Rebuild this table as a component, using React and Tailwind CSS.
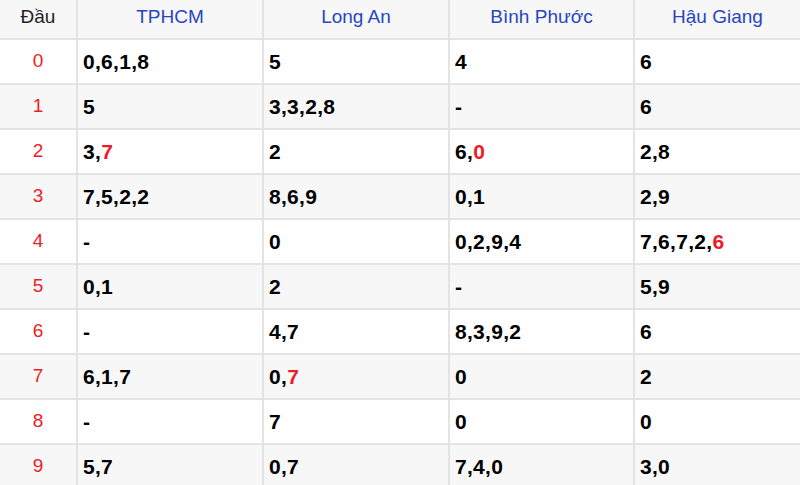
import React from "react";

const cols = ["TPHCM", "Long An", "Bình Phước", "Hậu Giang"];
// each cell: [text, redLast]
const rows = [
  [["0,6,1,8"], ["5"], ["4"], ["6"]],
  [["5"], ["3,3,2,8"], ["-"], ["6"]],
  [["3,", "7"], ["2"], ["6,", "0"], ["2,8"]],
  [["7,5,2,2"], ["8,6,9"], ["0,1"], ["2,9"]],
  [["-"], ["0"], ["0,2,9,4"], ["7,6,7,2,", "6"]],
  [["0,1"], ["2"], ["-"], ["5,9"]],
  [["-"], ["4,7"], ["8,3,9,2"], ["6"]],
  [["6,1,7"], ["0,", "7"], ["0"], ["2"]],
  [["-"], ["7"], ["0"], ["0"]],
  [["5,7"], ["0,7"], ["7,4,0"], ["3,0"]],
];

export default function App() {
  return (
    <div
      className="w-[800px] h-[485px] overflow-hidden bg-white"
      style={{ fontFamily: '"Liberation Sans", Arial, sans-serif' }}
    >
      <div className="grid grid-cols-[78px_186px_186px_185px_165px]">
        <div className="h-[40px] bg-[#f7f7f7] border-r-2 border-b-2 border-[#e3e3e3] flex items-center justify-center text-[19px] text-[#222] pb-[4px]">
          Đầu
        </div>
        {cols.map((c, i) => (
          <div
            key={c}
            className={`h-[40px] bg-[#f7f7f7] border-b-2 border-[#e3e3e3] flex items-center justify-center text-[19px] text-[#2946c0] pb-[4px] ${i < 3 ? "border-r-2" : ""}`}
          >
            {c}
          </div>
        ))}
        {rows.map((r, ri) => {
          const bg = ri % 2 === 1 ? "bg-[#f7f7f7]" : "bg-white";
          return (
            <React.Fragment key={ri}>
              <div
                className={`h-[45px] ${bg} border-r-2 border-b-2 border-[#e3e3e3] flex items-center justify-center text-[19px] text-[#ee1c25]`}
              >
                {ri}
              </div>
              {r.map((cell, ci) => (
                <div
                  key={ci}
                  className={`h-[45px] ${bg} border-b-2 border-[#e3e3e3] flex items-center pl-[5px] text-[21px] font-bold text-black tracking-[0.3px] ${ci < 3 ? "border-r-2" : ""}`}
                >
                  <span>{cell[0]}</span>
                  {cell[1] && <span className="text-[#ee1c25]">{cell[1]}</span>}
                </div>
              ))}
            </React.Fragment>
          );
        })}
      </div>
    </div>
  );
}
